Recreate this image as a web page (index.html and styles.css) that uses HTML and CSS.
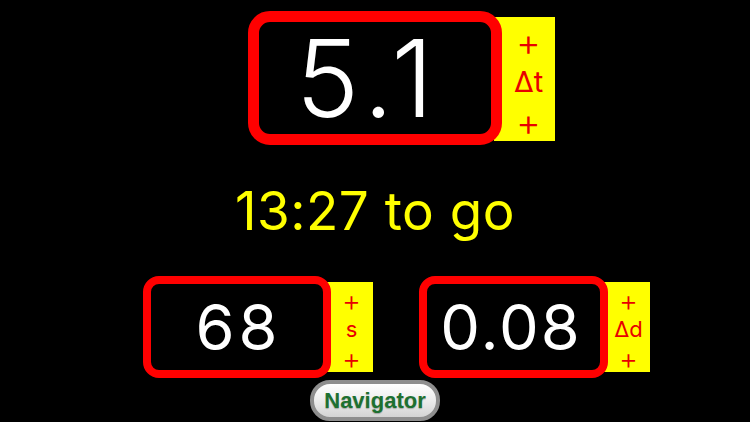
FILE: index.html
```html
<!DOCTYPE html>
<html lang="en">
<head>
<meta charset="utf-8">
<title>Timer</title>
<link rel="stylesheet" href="styles.css">
</head>
<body>
<main class="screen">
  <div class="unit">
    <div class="dial dial-big"><span class="value">5.1</span></div>
    <div class="tab tab-big"><span class="plus">+</span><span>Δt</span><span class="plus">+</span></div>
  </div>
  <div class="remaining">13:27 to go</div>
  <div class="row">
    <div class="unit">
      <div class="dial dial-small dial-left"><span class="value">68</span></div>
      <div class="tab tab-small"><span class="plus">+</span><span>s</span><span class="plus">+</span></div>
    </div>
    <div class="unit">
      <div class="dial dial-small dial-right"><span class="value">0.08</span></div>
      <div class="tab tab-small"><span class="plus">+</span><span>Δd</span><span class="plus">+</span></div>
    </div>
  </div>
  <button class="nav">Navigator</button>
</main>
</body>
</html>
```
FILE: styles.css
```css
html {
  background: #000;
}
body {
  margin: 0;
  padding: 0;
  width: 750px;
  height: 422px;
  overflow: hidden;
  font-family: Inter, "Liberation Sans", sans-serif;
}
.screen {
  display: flex;
  flex-direction: column;
  align-items: center;
  padding-top: 11px;
}
.unit {
  position: relative;
}
.dial {
  position: relative;
  z-index: 1;
  box-sizing: border-box;
  display: flex;
  align-items: center;
  justify-content: center;
  border: solid #ff0000;
  background: #000;
  color: #fff;
}
.dial .value {
  line-height: 1;
}
.dial-big {
  width: 254px;
  height: 134px;
  border-width: 11px;
  border-radius: 22px;
}
.dial-big .value {
  font-size: 107px;
  font-weight: 300;
  letter-spacing: 7px;
  margin-left: -14px;
}
.tab {
  position: absolute;
  z-index: 0;
  background: #ffff00;
  color: #e80000;
  display: flex;
  flex-direction: column;
  align-items: center;
  box-sizing: border-box;
}
.tab-big {
  left: calc(100% - 8px);
  width: 61px;
  top: 6px;
  height: 124px;
  padding: 5px 0 0 8px;
  font-size: 29px;
  line-height: 40px;
}
.tab-big .plus {
  font-size: 38px;
  font-weight: 300;
}
.remaining {
  margin-top: 36px;
  color: #ffff00;
  font-size: 53px;
  line-height: 60px;
  letter-spacing: 0.5px;
}
.row {
  margin-top: 35px;
  display: flex;
  gap: 88px;
}
.dial-small {
  height: 102px;
  border-width: 8px;
  border-radius: 16px;
}
.dial-left { width: 188px; }
.dial-right { width: 189px; }
.dial-small .value {
  font-size: 63px;
}
.dial-left .value {
  letter-spacing: 4px;
  margin-left: 4px;
}
.dial-right .value {
  letter-spacing: 2px;
  margin-left: -4px;
}
.tab-small {
  left: calc(100% - 6px);
  width: 48px;
  top: 6px;
  height: 90px;
  padding: 4px 0 0 6px;
  font-size: 22px;
  line-height: 29px;
}
.tab-small .plus {
  font-size: 29px;
  font-weight: 300;
}
.nav {
  margin-top: 2px;
  width: 130px;
  height: 41px;
  box-sizing: border-box;
  border: 4px solid #8e8e8e;
  border-radius: 20px;
  background: linear-gradient(#ffffff, #ececec 50%, #d4d4d4);
  color: #1d7030;
  font-family: "Liberation Sans", Arial, sans-serif;
  font-weight: bold;
  font-size: 22px;
  text-shadow: 0 1px 1px rgba(0, 0, 0, 0.25);
  padding: 0;
}
```
